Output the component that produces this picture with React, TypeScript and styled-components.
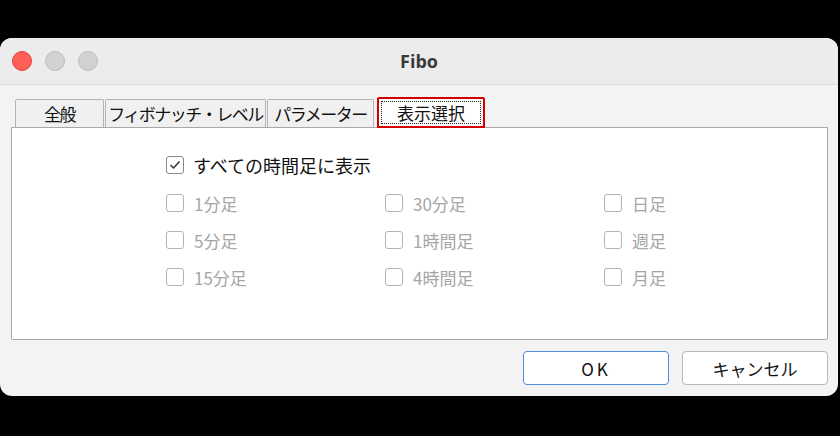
import React from 'react';
import styled, {createGlobalStyle} from "styled-components";

const GlobalStyle = createGlobalStyle`
  html, body {
    margin: 0;
    padding: 0;
    background: #000;
  }
  body {
    font-family: "Noto Sans CJK JP", "Liberation Sans", sans-serif;
  }
`

const tabs = ['全般', 'フィボナッチ・レベル', 'パラメーター', '表示選択'];
const tabWidths = [89, 161, 107, 108];

const periods = [
    ['1分足', '30分足', '日足'],
    ['5分足', '1時間足', '週足'],
    ['15分足', '4時間足', '月足'],
];

const CheckIcon = () => (
    <svg width="12" height="10" viewBox="0 0 12 10">
        <path d="M1.5 5 L4.5 8 L10.5 1.5" fill="none" stroke="#333" strokeWidth="1.5"/>
    </svg>
);

const App = () => {
    return (
        <>
            <GlobalStyle/>
            <Window>
                <TitleBar>
                    <Lights>
                        <Light color={'#fe5f57'} border={'#e0443e'}/>
                        <Light color={'#d2d2d2'} border={'#bdbdbd'}/>
                        <Light color={'#d2d2d2'} border={'#bdbdbd'}/>
                    </Lights>
                    <Title>Fibo</Title>
                </TitleBar>
                <Body>
                    <TabRow>
                        {tabs.map((t, i) => (
                            <Tab key={t} active={i === 3} width={tabWidths[i]}>
                                {i === 3 ? <Focus>{t}</Focus> : t}
                            </Tab>
                        ))}
                    </TabRow>
                    <Panel>
                        <AllRow>
                            <Box checked><CheckIcon/></Box>
                            <AllLabel>すべての時間足に表示</AllLabel>
                        </AllRow>
                        <Grid>
                            {periods.flat().map(p => (
                                <Item key={p}>
                                    <Box/>
                                    <ItemLabel>{p}</ItemLabel>
                                </Item>
                            ))}
                        </Grid>
                    </Panel>
                    <Buttons>
                        <Button primary>OK</Button>
                        <Button>キャンセル</Button>
                    </Buttons>
                </Body>
            </Window>
        </>
    );
};

const Window = styled.div`
  margin-top: 38px;
  width: 838px;
  height: 358px;
  background: #f3f3f3;
  border-radius: 12px;
  overflow: hidden;
  display: flex;
  flex-direction: column;
`
const TitleBar = styled.div`
  height: 46px;
  background: #ececec;
  border-bottom: 1px solid #dcdcdc;
  display: flex;
  align-items: center;
  position: relative;
  flex-shrink: 0;
`
const Lights = styled.div`
  display: flex;
  gap: 13px;
  padding-left: 12px;
`
const Light = styled.span<{color: string; border: string}>`
  width: 20px;
  height: 20px;
  border-radius: 50%;
  box-sizing: border-box;
  background: ${p => p.color};
  border: 1px solid ${p => p.border};
`
const Title = styled.div`
  position: absolute;
  left: 0;
  right: 0;
  text-align: center;
  font-family: "Open Sans", "Liberation Sans", sans-serif;
  font-weight: 700;
  font-size: 18px;
  color: #3a3a3a;
`
const Body = styled.div`
  padding: 13px 10px 0 11px;
  display: flex;
  flex-direction: column;
`
const TabRow = styled.div`
  display: flex;
  align-items: flex-end;
  gap: 1px;
  padding-left: 4px;
  height: 29px;
`
const Tab = styled.div<{active?: boolean; width: number}>`
  box-sizing: border-box;
  width: ${p => p.width}px;
  height: ${p => p.active ? 31 : 28}px;
  margin-left: ${p => p.active ? 2 : 0}px;
  border: ${p => p.active ? '2px solid #d40000' : '1px solid #b4b4b4'};
  border-bottom: ${p => p.active ? '2px solid #d40000' : 'none'};
  background: ${p => p.active ? '#fff' : '#f0f0f0'};
  border-radius: 2px 2px 0 0;
  display: flex;
  align-items: center;
  justify-content: center;
  font-size: 17px;
  letter-spacing: -1.5px;
  white-space: nowrap;
  color: #111;
  margin-bottom: ${p => p.active ? -1 : 0}px;
  position: relative;
  z-index: ${p => p.active ? 2 : 0};
  padding: ${p => p.active ? 2 : 0}px;
`
const Focus = styled.span`
  flex: 1;
  align-self: stretch;
  display: flex;
  align-items: center;
  justify-content: center;
  border: 1px dotted #222;
  letter-spacing: 0;
`
const Panel = styled.div`
  height: 213px;
  box-sizing: border-box;
  background: #fff;
  border: 1px solid #a8a8a8;
  border-radius: 0 0 2px 2px;
  padding: 26px 0 0 154px;
`
const AllRow = styled.div`
  display: flex;
  align-items: center;
  gap: 9px;
  height: 22px;
`
const Box = styled.span<{checked?: boolean}>`
  width: 18px;
  height: 18px;
  box-sizing: border-box;
  border: 1px solid ${p => p.checked ? '#8a8a8a' : '#b3b3b3'};
  border-radius: 3px;
  display: flex;
  align-items: center;
  justify-content: center;
  background: #fff;
`
const AllLabel = styled.span`
  font-size: 18px;
  color: #111;
`
const Grid = styled.div`
  display: grid;
  grid-template-columns: repeat(3, 219px);
  row-gap: 15px;
  margin-top: 16px;
`
const Item = styled.div`
  display: flex;
  align-items: center;
  gap: 10px;
  height: 22px;
`
const ItemLabel = styled.span`
  font-size: 17px;
  color: #a6a6a6;
`
const Buttons = styled.div`
  display: flex;
  justify-content: flex-end;
  gap: 13px;
  margin-top: 11px;
`
const Button = styled.button<{primary?: boolean}>`
  width: 146px;
  height: 34px;
  background: #fff;
  border: 1px solid ${p => p.primary ? '#4a90d9' : '#b8b8b8'};
  border-radius: 4px;
  font-family: "Noto Sans CJK JP", "Liberation Sans", sans-serif;
  font-size: 17px;
  color: #111;
  letter-spacing: ${p => p.primary ? '3px' : '0'};
  padding: 0;
`

export default App;
